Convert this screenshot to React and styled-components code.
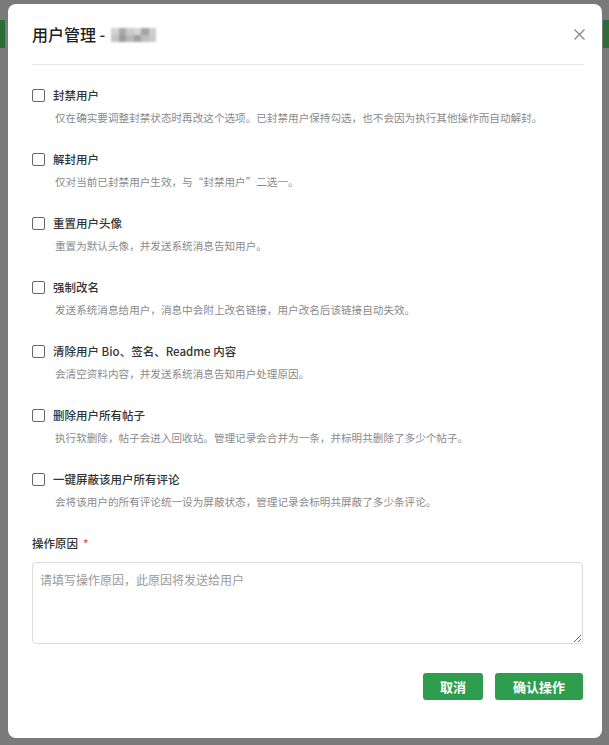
import styled, { createGlobalStyle } from "styled-components";

const GlobalStyle = createGlobalStyle`
  html, body {
    margin: 0;
    padding: 0;
  }
  body {
    font-family: "Noto Sans CJK SC", "Noto Sans", sans-serif;
    background: #7a7a7a;
  }
`;

const Backdrop = styled.div`
  height: 745px;
  box-sizing: border-box;
  padding: 4px 7px 7px 8px;
  background:
    linear-gradient(#2d6b37, #2d6b37) 0 20px / 5px 28px no-repeat,
    linear-gradient(#2d6b37, #2d6b37) right 20px / 6px 28px no-repeat,
    #7a7a7a;
`;

const Modal = styled.div`
  height: 100%;
  box-sizing: border-box;
  background: #fff;
  border-radius: 8px;
  padding: 0 19px 0 24px;
  display: flex;
  flex-direction: column;
`;

const Header = styled.div`
  display: flex;
  align-items: center;
  justify-content: space-between;
  height: 60px;
  margin-right: -1px;
  border-bottom: 1px solid #e8e8e8;
`;

const Title = styled.h2`
  margin: 0;
  font-size: 16px;
  font-weight: 500;
  color: #1f1f1f;
  display: flex;
  align-items: center;
  gap: 6px;
`;

const Blur = styled.span`
  display: inline-grid;
  grid-template-columns: repeat(6, 7.5px);
  grid-template-rows: repeat(2, 7px);
  margin-top: 1px;
  filter: blur(1px);
`;

const BlurCell = styled.span`
  background: ${(p) => p.$c};
`;

const Close = styled.button`
  border: none;
  background: none;
  padding: 0;
  margin-right: -3px;
  width: 16px;
  height: 16px;
  display: flex;
  align-items: center;
  justify-content: center;
  cursor: pointer;
`;

const Options = styled.div`
  display: flex;
  flex-direction: column;
  padding-top: 21px;
  gap: 24px;
`;

const Option = styled.div`
  display: flex;
  flex-direction: column;
  gap: 5px;
`;

const LabelRow = styled.label`
  display: flex;
  align-items: center;
  gap: 8px;
  font-size: 11.5px;
  font-weight: 500;
  color: #333;
  line-height: 18px;
`;

const Box = styled.span`
  width: 11px;
  height: 11px;
  border: 1px solid #666;
  border-radius: 2px;
  background: #fff;
  flex-shrink: 0;
`;

const Desc = styled.div`
  padding-left: 23px;
  font-size: 10.6px;
  color: #8a8a8a;
  line-height: 17px;
`;

const Field = styled.div`
  margin-top: 24px;
  display: flex;
  flex-direction: column;
  gap: 10px;
`;

const FieldLabel = styled.div`
  font-size: 11.5px;
  font-weight: 500;
  color: #333;
  line-height: 18px;
`;

const Required = styled.span`
  color: #d9534f;
  margin-left: 5px;
`;

const TextArea = styled.textarea`
  box-sizing: border-box;
  width: 100%;
  height: 82px;
  border: 1px solid #dcdcdc;
  border-radius: 4px;
  padding: 8px 7px;
  font-family: inherit;
  font-size: 12px;
  color: #333;
  resize: vertical;
  outline: none;

  &::placeholder {
    color: #9a9a9a;
  }
`;

const Footer = styled.div`
  display: flex;
  justify-content: flex-end;
  gap: 12px;
  margin-top: 29px;
`;

const Button = styled.button`
  height: 27px;
  padding: 0 ${(p) => p.$pad}px;
  border: none;
  border-radius: 3px;
  background: #2e9e4e;
  color: #fff;
  font-family: inherit;
  font-size: 13px;
  font-weight: 700;
  cursor: pointer;
`;

const options = [
  ["封禁用户", "仅在确实要调整封禁状态时再改这个选项。已封禁用户保持勾选，也不会因为执行其他操作而自动解封。"],
  ["解封用户", "仅对当前已封禁用户生效，与“封禁用户”二选一。"],
  ["重置用户头像", "重置为默认头像，并发送系统消息告知用户。"],
  ["强制改名", "发送系统消息给用户，消息中会附上改名链接，用户改名后该链接自动失效。"],
  ["清除用户 Bio、签名、Readme 内容", "会清空资料内容，并发送系统消息告知用户处理原因。"],
  ["删除用户所有帖子", "执行软删除，帖子会进入回收站。管理记录会合并为一条，并标明共删除了多少个帖子。"],
  ["一键屏蔽该用户所有评论", "会将该用户的所有评论统一设为屏蔽状态，管理记录会标明共屏蔽了多少条评论。"],
];

const blurColors = [
  "#d2d2d2", "#a9a9a9", "#cccccc", "#d6d6d6", "#a4a4a4", "#cdcdcd",
  "#c4c4c4", "#9c9c9c", "#b8b8b8", "#a2a2a2", "#bdbdbd", "#c9c9c9",
];

export default function App() {
  return (
    <>
      <GlobalStyle />
      <Backdrop>
        <Modal>
          <Header>
            <Title>
              用户管理 -
              <Blur>
                {blurColors.map((c, i) => (
                  <BlurCell key={i} $c={c} />
                ))}
              </Blur>
            </Title>
            <Close aria-label="关闭">
              <svg width="11" height="11" viewBox="0 0 11 11">
                <path d="M0.5 0.5L10.5 10.5M10.5 0.5L0.5 10.5" stroke="#8a8a8a" strokeWidth="1.4" />
              </svg>
            </Close>
          </Header>
          <Options>
            {options.map(([label, desc]) => (
              <Option key={label}>
                <LabelRow>
                  <Box />
                  {label}
                </LabelRow>
                <Desc>{desc}</Desc>
              </Option>
            ))}
          </Options>
          <Field>
            <FieldLabel>
              操作原因<Required>*</Required>
            </FieldLabel>
            <TextArea placeholder="请填写操作原因，此原因将发送给用户" />
          </Field>
          <Footer>
            <Button $pad={17}>取消</Button>
            <Button $pad={18}>确认操作</Button>
          </Footer>
        </Modal>
      </Backdrop>
    </>
  );
}
